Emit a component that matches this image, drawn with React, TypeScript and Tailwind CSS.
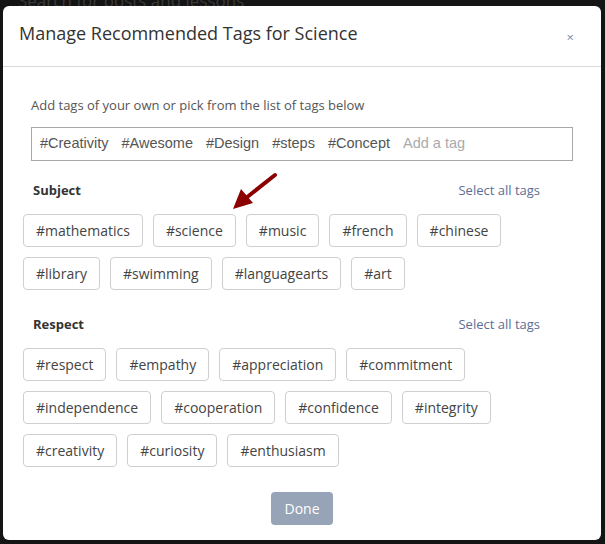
import React from "react";

const subject = ["#mathematics", "#science", "#music", "#french", "#chinese", "#library", "#swimming", "#languagearts", "#art"];
const respect = ["#respect", "#empathy", "#appreciation", "#commitment", "#independence", "#cooperation", "#confidence", "#integrity", "#creativity", "#curiosity", "#enthusiasm"];
const own = ["#Creativity", "#Awesome", "#Design", "#steps", "#Concept"];

function Chip({ label }: { label: string }) {
  return (
    <div className="h-[33px] px-3 flex items-center border border-[#cfcfcf] rounded-[4px] text-[14px] text-[#444] bg-white">
      {label}
    </div>
  );
}

function Section({ title, tags }: { title: string; tags: string[] }) {
  return (
    <div>
      <div className="flex justify-between items-center pl-[10px] pr-[41px] h-[20px]">
        <span className="text-[13px] font-bold text-[#333]">{title}</span>
        <span className="text-[13px] text-[#5b6e96]">Select all tags</span>
      </div>
      <div className="flex flex-wrap gap-[10px] mt-[13px] pr-[20px]">
        {tags.map((t) => (
          <Chip key={t} label={t} />
        ))}
      </div>
    </div>
  );
}

export default function App() {
  return (
    <div className="relative h-[544px] w-[605px] bg-[#141414] overflow-hidden" style={{ fontFamily: '"Open Sans", sans-serif' }}>
      <div className="pl-[18px] text-[17px] leading-[14px] -mt-[6px] text-[#3a3a3a]">Search for posts and lessons</div>
      <div className="absolute left-[3px] top-[6px] w-[598px] h-[534px] bg-white rounded-[6px] flex flex-col">
        <div className="h-[61px] flex items-center justify-between pl-[16px] pr-[27px] border-b border-[#d9d9d9]">
          <span className="text-[18px] text-[#333] -mt-[6px]">Manage Recommended Tags for Science</span>
          <span className="text-[13px] text-[#7d8aa3] mt-[3px]">×</span>
        </div>
        <div className="relative px-[20px] pt-[29px]">
          <div className="pl-[8px] pr-[8px]">
            <div className="text-[13px] text-[#555] leading-[18px]">Add tags of your own or pick from the list of tags below</div>
            <div className="mt-[13px] h-[34px] border border-[#a8a8a8] flex items-center gap-[13px] px-[8px] text-[14.5px]" style={{ fontFamily: '"Liberation Sans", Arial, sans-serif' }}>
              {own.map((t) => (
                <span key={t} className="text-[#555]">{t}</span>
              ))}
              <span className="text-[#aaa]">Add a tag</span>
            </div>
          </div>
          <div className="mt-[20px]">
            <Section title="Subject" tags={subject} />
          </div>
          <div className="mt-[25px]">
            <Section title="Respect" tags={respect} />
          </div>
          <div className="flex justify-center mt-[25px]">
            <div className="h-[33px] w-[62px] rounded-[4px] bg-[#97a3b6] text-white text-[14px] flex items-center justify-center">Done</div>
          </div>
          <svg className="absolute left-[225px] top-[104px]" width="60" height="50" viewBox="0 0 60 50">
            <line x1="47" y1="4" x2="18" y2="27" stroke="#8b0000" strokeWidth="4" strokeLinecap="round" />
            <polygon points="5,38 13,18 25,32" fill="#8b0000" />
          </svg>
        </div>
      </div>
    </div>
  );
}
